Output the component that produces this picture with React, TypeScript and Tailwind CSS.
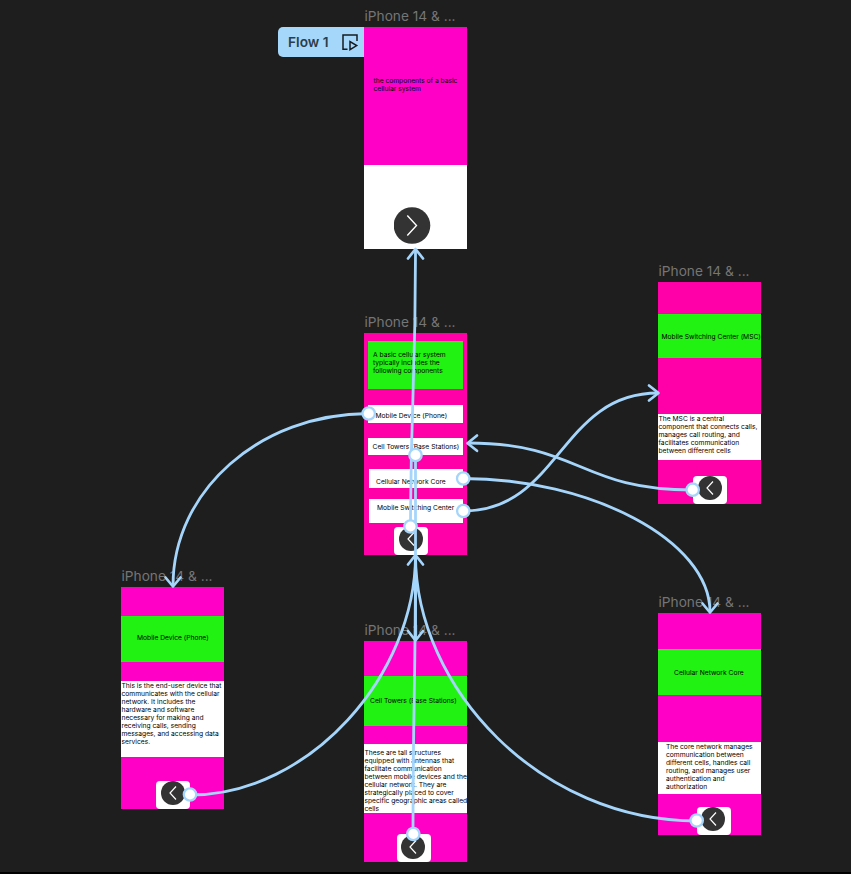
import type { ReactNode } from "react";

const LINE = "#a5d5fb";

function Frame({ at, color, children }: { at: string; color: string; children: ReactNode }) {
  return (
    <section className={`absolute w-[103px] ${at}`}>
      <h2 className="absolute -top-[19px] left-[0.5px] text-[13.7px] leading-4 whitespace-nowrap text-[#757575]">
        iPhone 14 &amp; ...
      </h2>
      <div className={`flex h-full w-full flex-col overflow-hidden ${color}`}>{children}</div>
    </section>
  );
}

function Copy({ lines, className = "" }: { lines: string[]; className?: string }) {
  return (
    <p className={`text-[6.7px] leading-[8.07px] whitespace-nowrap text-black ${className}`}>
      {lines.map((l) => (
        <span key={l} className="block">
          {l}
        </span>
      ))}
    </p>
  );
}

function BackButton({ className, inner }: { className: string; inner: string }) {
  return (
    <div className={`mt-auto h-7 w-[34px] shrink-0 rounded-[4px] bg-white ${className}`}>
      <svg viewBox="0 0 24 24" className={`size-6 ${inner}`} fill="none">
        <circle cx="12" cy="12" r="12" fill="#333" />
        <path d="M15 5.5 9 12l6 6.500" stroke="#fff" strokeWidth="1.2" />
      </svg>
    </div>
  );
}

const connectors = [
  "M368.5 413.5C260 414 173 490 173 586",
  "M463 478.5C590 478.5 710 540 710 612",
  "M463 511C560 511 560 393 658 393",
  "M692.5 490C580 490 580 443 468 443",
  "M190 795C310 795 415.5 675 415.5 555",
  "M697 821C540 821 415.5 688 415.5 555",
  "M410.5 526C411 390 415.5 390 415.5 249",
  "M415.5 455V639",
  "M413 834C413 700 415.5 690 415.5 555",
];

const heads = [
  "M165.5 577.5 173 586.5l7.500-9",
  "M702.500 603.500 710 612.500l7.500-9",
  "M649 385.500 658.500 393l-9.500 7.500",
  "M477 435.500 467.500 443.300l9.500 7.500",
  "M408 258.500 415.500 249l7.500 9.500",
  "M408 564.500 415.500 555l7.500 9.500",
  "M408 631 415.500 640.500l7.500-9.500",
];

const handles = [
  [368.7, 413.5],
  [463.2, 478.5],
  [463.3, 511],
  [692.7, 489.7],
  [190, 794.5],
  [696.7, 820.5],
  [410.5, 526.5],
  [415.5, 455],
  [413.3, 834],
];

export default function App() {
  return (
    <main className="relative h-[874px] w-[851px] overflow-hidden border-b-2 border-black bg-[#1e1e1e] font-['Inter',sans-serif]">
      <div className="absolute top-[27px] left-[278px] flex h-[30px] w-[86px] items-center justify-between rounded-l-[5px] bg-[#a5d7fb] pr-[5px] pl-[10px]">
        <span className="text-[13.7px] font-semibold whitespace-nowrap text-[#2c3d49]">Flow 1</span>
        <svg viewBox="0 0 18 18" className="size-[18px]" fill="none" stroke="#161b1f" strokeWidth="1.500">
          <path d="M6.500 16.300H2V2h14v6" />
          <path d="M9 8.500v8.200l6.700-4.100z" />
        </svg>
      </div>

      <Frame at="top-[27px] left-[364px] h-[222px]" color="bg-[#ff00c7]">
        <div className="h-[138px] shrink-0 pt-[50px] pl-[9.500px]">
          <Copy lines={["the components of a basic", "cellular system"]} />
        </div>
        <div className="flex-1 bg-white pt-[41.500px] pl-[29.500px]">
          <svg viewBox="0 0 37 37" className="size-[37px]" fill="none">
            <circle cx="18" cy="18.500" r="18.300" fill="#333" />
            <path d="M13.300 8.500 22.500 18.500l-9.200 10" stroke="#fff" strokeWidth="1.400" />
          </svg>
        </div>
      </Frame>

      <Frame at="top-[333px] left-[364px] h-[222px]" color="bg-[#ff00a8]">
        <div className="mt-2 ml-1 h-12 w-[95px] shrink-0 bg-[#22f211] pt-[9.500px] pl-[5px]">
          <Copy lines={["A basic cellular system", "typically includes the", "following components"]} />
        </div>
        <div className="mt-4 ml-1 h-[18px] w-[95px] shrink-0 bg-white pt-[6.500px] pl-[7.500px]">
          <Copy lines={["Mobile Device (Phone)"]} />
        </div>
        <div className="mt-[15px] ml-1 h-[17px] w-[95px] shrink-0 bg-white pt-[5px] pl-[4.500px]">
          <Copy lines={["Cell Towers (Base Stations)"]} />
        </div>
        <div className="mt-[14px] ml-[5px] h-[19px] w-[94px] shrink-0 bg-white pt-[8.500px] pl-[7px]">
          <Copy lines={["Cellular Network Core"]} />
        </div>
        <div className="mt-[11px] ml-[5px] h-6 w-[94px] shrink-0 bg-white pt-[5px] pl-2">
          <Copy lines={["Mobile Switching Center"]} />
        </div>
        <BackButton className="ml-[30px]" inner="ml-[4.500px]" />
      </Frame>

      <Frame at="top-[282px] left-[658px] h-[222px]" color="bg-[#ff00a8]">
        <div className="mt-8 h-11 shrink-0 bg-[#22f211] pt-[18.500px] pl-[3.500px]">
          <Copy lines={["Mobile Switching Center (MSC)"]} />
        </div>
        <div className="mt-14 h-[46px] shrink-0 bg-white pt-[0.800px] pl-[0.500px]">
          <Copy
            lines={[
              "The MSC is a central",
              "component that connects calls,",
              "manages call routing, and",
              "facilitates communication",
              "between different cells",
            ]}
          />
        </div>
        <BackButton className="ml-[35px]" inner="ml-[4.500px]" />
      </Frame>

      <Frame at="top-[587px] left-[121px] h-[222px]" color="bg-[#ff00c7]">
        <div className="mt-[29px] h-[46px] shrink-0 bg-[#22f211] pt-[17.500px] pl-4">
          <Copy lines={["Mobile Device (Phone)"]} />
        </div>
        <div className="mt-[19px] h-[76px] shrink-0 bg-white pt-[0.500px] pl-[0.500px]">
          <Copy
            lines={[
              "This is the end-user device that",
              "communicates with the cellular",
              "network. It includes the",
              "hardware and software",
              "necessary for making and",
              "receiving calls, sending",
              "messages, and accessing data",
              "services.",
            ]}
          />
        </div>
        <BackButton className="ml-[35px]" inner="ml-[4.500px]" />
      </Frame>

      <Frame at="top-[640.5px] left-[364px] h-[221.5px]" color="bg-[#ff00c7]">
        <div className="mt-[35.5px] h-[50px] shrink-0 bg-[#22f211] pt-[21px] pl-[6px]">
          <Copy lines={["Cell Towers (Base Stations)"]} />
        </div>
        <div className="mt-[18px] h-[69px] shrink-0 bg-white pt-[4.500px] pl-[0.500px]">
          <Copy
            lines={[
              "These are tall structures",
              "equipped with antennas that",
              "facilitate communication",
              "between mobile devices and the",
              "cellular network. They are",
              "strategically placed to cover",
              "specific geographic areas called",
              "cells",
            ]}
          />
        </div>
        <BackButton className="ml-[32.5px]" inner="mt-[0.500px] ml-[4.500px]" />
      </Frame>

      <Frame at="top-[613px] left-[658px] h-[222px]" color="bg-[#ff00c7]">
        <div className="mt-9 h-[46px] shrink-0 bg-[#22f211] pt-[19.500px] pl-4">
          <Copy lines={["Cellular Network Core"]} />
        </div>
        <div className="mt-[47px] h-[52px] shrink-0 bg-white pt-[0.800px] pl-2">
          <Copy
            lines={[
              "The core network manages",
              "communication between",
              "different cells, handles call",
              "routing, and manages user",
              "authentication and",
              "authorization",
            ]}
          />
        </div>
        <BackButton className="ml-[38.5px]" inner="ml-[4.500px]" />
      </Frame>

      <svg viewBox="0 0 851 874" className="pointer-events-none absolute top-0 left-0 h-[874px] w-[851px]" fill="none" stroke={LINE}>
        {connectors.map((d) => (
          <path key={d} d={d} strokeWidth="2.800" />
        ))}
        {heads.map((d) => (
          <path key={d} d={d} strokeWidth="2.700" strokeLinecap="round" strokeLinejoin="round" />
        ))}
        {handles.map(([x, y]) => (
          <circle key={`${x}-${y}`} cx={x} cy={y} r="6.200" fill="#fff" strokeWidth="2.300" />
        ))}
      </svg>
    </main>
  );
}
